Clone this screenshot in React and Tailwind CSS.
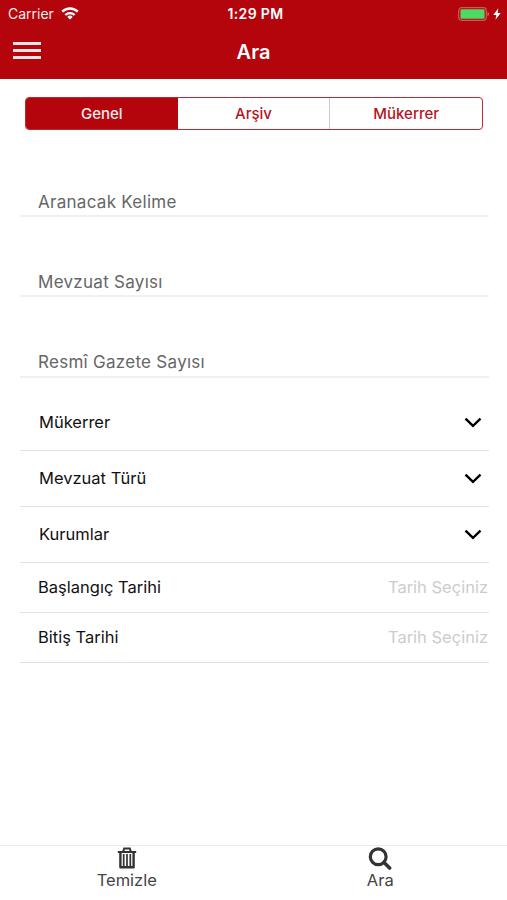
import React from 'react';

const tabs = ['Genel', 'Arşiv', 'Mükerrer'];
const textFields = ['Aranacak Kelime', 'Mevzuat Sayısı', 'Resmî Gazete Sayısı'];
const selects = ['Mükerrer', 'Mevzuat Türü', 'Kurumlar'];
const dates = ['Başlangıç Tarihi', 'Bitiş Tarihi'];

const WifiIcon = () => (
  <svg width="18" height="13" viewBox="0 0 18 13" fill="none" stroke="#fff" strokeWidth="2.4">
    <path d="M1.2 4.7a11.2 11.2 0 0 1 15.6 0" />
    <path d="M4.3 8a6.8 6.8 0 0 1 9.4 0" />
    <path d="M9 12.6 6.3 9.9a3.9 3.9 0 0 1 5.4 0z" fill="#fff" stroke="none" />
  </svg>
);

const BatteryIcon = () => (
  <svg width="32" height="14" viewBox="0 0 32 14">
    <rect x="0.7" y="0.7" width="27.6" height="12.6" rx="3" fill="none" stroke="#cf5a58" strokeWidth="1.2" />
    <rect x="2.4" y="2.3" width="24.2" height="9.4" rx="1.2" fill="#4cd964" />
    <path d="M29.5 5v4c1-.3 1.5-1 1.5-2s-.5-1.7-1.5-2z" fill="#d2696b" />
  </svg>
);

const BoltIcon = () => (
  <svg width="8" height="12" viewBox="0 0 8 12" fill="#fff">
    <path d="M5.3.3.3 6.9h3L2.5 11.7 7.7 5h-3z" />
  </svg>
);

const ChevronIcon = () => (
  <svg width="18" height="12" viewBox="0 0 18 12" fill="none" stroke="#000" strokeWidth="2.4">
    <path d="M1.5 1.6 9 8.9l7.5-7.300" />
  </svg>
);

const TrashIcon = () => (
  <svg width="20" height="22" viewBox="0 0 20 22" fill="none" stroke="#333" strokeWidth="2">
    <path d="M.8 5h18.400" />
    <path d="M6.200 4.600 7.200 1.500h5.600l1 3.100" />
    <path d="M3.400 5v15.300h13.200V5" strokeWidth="2.400" strokeLinejoin="round" />
    <path d="M6.700 7v12M10 7v12M13.300 7v12" strokeWidth="1.700" />
  </svg>
);

const SearchIcon = () => (
  <svg width="24" height="23" viewBox="0 0 24 23" fill="none" stroke="#333">
    <circle cx="10.200" cy="9.700" r="7.900" strokeWidth="3.200" />
    <path d="m16 15.500 5.600 5.500" strokeWidth="3.600" strokeLinecap="round" />
  </svg>
);

const Header = () => (
  <header className="h-[79px] bg-[#b4040c] text-white">
    <div className="grid h-[27px] grid-cols-3 items-center">
      <div className="flex items-center gap-[7px] pl-[8px]">
        <span className="text-[14px] text-[#fdeaea]">Carrier</span>
        <WifiIcon />
      </div>
      <div className="pl-[4px] text-center text-[14px] font-semibold tracking-[0.35px]">1:29 PM</div>
      <div className="flex items-center justify-end gap-[3px] pr-[6px]">
        <BatteryIcon />
        <BoltIcon />
      </div>
    </div>
    <div className="grid h-[50px] grid-cols-3 items-center">
      <button className="ml-[13px] flex w-7 flex-col gap-[4px] pb-[3px]">
        <span className="h-[3px] bg-[#fbe3e4]" />
        <span className="h-[3px] bg-[#fbe3e4]" />
        <span className="h-[3px] bg-[#fbe3e4]" />
      </button>
      <h1 className="text-center text-[20px] font-semibold">Ara</h1>
    </div>
  </header>
);

export default function App() {
  return (
    <div className="flex h-[900px] w-[507px] flex-col bg-white font-[Inter,sans-serif]">
      <Header />

      <div className="mt-[18px] mr-[24px] ml-[25px] flex h-[33px] overflow-hidden rounded-[4px] border border-[#be2a30]">
        {tabs.map((tab, i) => (
          <button
            key={tab}
            className={
              i === 0
                ? 'flex-1 bg-[#b4040c] pt-[2px] text-[15px] font-medium text-[#fde9ea]'
                : i === 1
                  ? 'flex-1 border-r border-[#ccc] pt-[2px] text-[15px] font-medium text-[#b4151c]'
                  : 'flex-1 pt-[2px] text-[15px] font-medium text-[#b4151c]'
            }
          >
            {tab}
          </button>
        ))}
      </div>

      <main className="mr-[18px] ml-[20px] flex-1 pt-[7px] text-[16.5px]">
        {textFields.map((label, i) => (
          <div
            key={label}
            className={`flex items-end border-b-2 border-[#f0f0f0] pl-[18px] text-[17px] leading-6 tracking-[0.28px] text-[#666] ${i === 2 ? 'h-[81px] pb-[2px]' : 'h-[80px] pb-px'}`}
          >
            {label}
          </div>
        ))}
        {selects.map((label, i) => (
          <div
            key={label}
            className={`flex items-center justify-between border-b border-[#e2e2e2] pr-[7px] pl-[19px] text-[#111] ${i === 0 ? 'h-[73px] pt-[17px]' : 'h-[56px]'}`}
          >
            {label}
            <ChevronIcon />
          </div>
        ))}
        {dates.map((label) => (
          <div key={label} className="flex h-[50px] items-center justify-between border-b border-[#e2e2e2] pl-[18px] text-[#111]">
            {label}
            <span className="pr-px text-[#ccc]">Tarih Seçiniz</span>
          </div>
        ))}
      </main>

      <footer className="grid h-[55px] grid-cols-2 border-t border-[#e9e9e9] text-[16.5px] text-[#444]">
        <button className="flex flex-col items-center pt-px">
          <TrashIcon />
          <span className="leading-[22px]">Temizle</span>
        </button>
        <button className="flex flex-col items-center pt-px">
          <SearchIcon />
          <span className="leading-5">Ara</span>
        </button>
      </footer>
    </div>
  );
}
